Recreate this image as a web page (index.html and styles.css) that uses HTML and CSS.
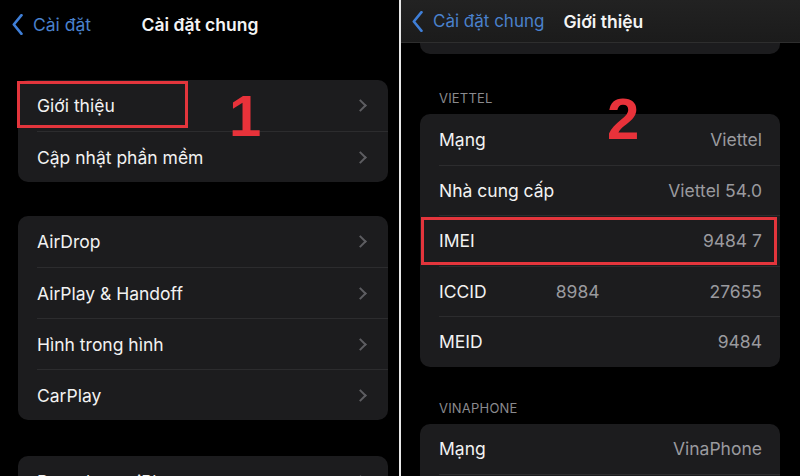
FILE: index.html
```html
<!DOCTYPE html>
<html lang="vi">
<head>
    <meta charset="UTF-8">
    <meta name="viewport" content="width=device-width, initial-scale=1.0">
    <title>Cài đặt chung - Giới thiệu</title>
    <link rel="stylesheet" href="styles.css">
</head>
<body>
    <div class="screens">
        <!-- Left screen: General settings -->
        <section class="panel panel-left">
            <header class="nav">
                <a class="nav-back" href="#">
                    <svg width="11" height="21" viewBox="0 0 11 21"><path d="M9.5 1.2L1.8 10.5l7.7 9.3" fill="none" stroke="currentColor" stroke-width="2.6" stroke-linecap="round" stroke-linejoin="round"/></svg>
                    <span>Cài đặt</span>
                </a>
                <h1 class="nav-title">Cài đặt chung</h1>
                <span></span>
            </header>

            <div class="group group-first">
                <div class="row">
                    <div class="row-body"><span class="row-label">Giới thiệu</span><span class="chev"></span></div>
                    <div class="mark mark-about"></div>
                </div>
                <div class="row">
                    <div class="row-body"><span class="row-label">Cập nhật phần mềm</span><span class="chev"></span></div>
                </div>
                <div class="step step-one">1</div>
            </div>

            <div class="group">
                <div class="row"><div class="row-body"><span class="row-label">AirDrop</span><span class="chev"></span></div></div>
                <div class="row"><div class="row-body"><span class="row-label">AirPlay &amp; Handoff</span><span class="chev"></span></div></div>
                <div class="row"><div class="row-body"><span class="row-label">Hình trong hình</span><span class="chev"></span></div></div>
                <div class="row"><div class="row-body"><span class="row-label">CarPlay</span><span class="chev"></span></div></div>
            </div>

            <div class="group group-last">
                <div class="row"><div class="row-body"><span class="row-label">Dung lượng iPhone</span><span class="chev"></span></div></div>
            </div>
        </section>

        <div class="divider"></div>

        <!-- Right screen: About -->
        <section class="panel panel-right">
            <header class="nav-bar">
                <a class="nav-back" href="#">
                    <svg width="11" height="21" viewBox="0 0 11 21"><path d="M9.5 1.2L1.8 10.5l7.7 9.3" fill="none" stroke="currentColor" stroke-width="2.6" stroke-linecap="round" stroke-linejoin="round"/></svg>
                    <span>Cài đặt chung</span>
                </a>
                <h1 class="nav-title">Giới thiệu</h1>
            </header>
            <div class="group-tail"></div>

            <h2 class="group-header group-header-first">VIETTEL</h2>
            <div class="group group-info">
                <div class="row"><div class="row-body"><span class="row-label">Mạng</span><span class="row-value">Viettel</span></div></div>
                <div class="row"><div class="row-body"><span class="row-label">Nhà cung cấp</span><span class="row-value">Viettel 54.0</span></div></div>
                <div class="row">
                    <div class="row-body"><span class="row-label">IMEI</span><span class="row-value">9484 7</span></div>
                    <div class="mark mark-imei"></div>
                </div>
                <div class="row"><div class="row-body"><span class="row-label">ICCID</span><span class="row-value split"><span>8984</span><span>27655</span></span></div></div>
                <div class="row"><div class="row-body"><span class="row-label">MEID</span><span class="row-value">9484</span></div></div>
                <div class="step step-two">2</div>
            </div>

            <h2 class="group-header">VINAPHONE</h2>
            <div class="group group-info">
                <div class="row"><div class="row-body"><span class="row-label">Mạng</span><span class="row-value">VinaPhone</span></div></div>
                <div class="row"><div class="row-body"><span class="row-label">Nhà cung cấp</span><span class="row-value">VinaPhone</span></div></div>
            </div>
        </section>
    </div>
</body>
</html>
```

FILE: styles.css
```css
body {
    margin: 0;
    padding: 0;
    background-color: #000;
    color: #f2f2f2;
    font-family: Inter, "Noto Sans", sans-serif;
}

.screens {
    display: flex;
    width: 800px;
    height: 476px;
    overflow: hidden;
}

.panel {
    position: relative;
    background-color: #000;
    overflow: hidden;
}

.panel-left {
    width: 399px;
    padding: 0 11px 0 18px;
    box-sizing: border-box;
}

.panel-right {
    flex: 1;
    padding: 0 20px 0 19px;
}

.divider {
    width: 2px;
    background-color: #e8e8e8;
}

/* navigation bars */
.nav {
    display: grid;
    grid-template-columns: 1fr auto 1fr;
    align-items: center;
    height: 48px;
    margin-left: -6px;
}

.nav-back {
    display: flex;
    align-items: center;
    gap: 10px;
    color: #3f7fd8;
    text-decoration: none;
    font-size: 17.5px;
    white-space: nowrap;
}

.nav-back span {
    color: #4a81cc;
}

.nav-title {
    margin: 0;
    font-size: 17.5px;
    font-weight: 600;
    color: #f4f4f4;
    white-space: nowrap;
}

.nav-bar {
    display: flex;
    align-items: center;
    gap: 19px;
    height: 43px;
    margin: 0 -20px 0 -19px;
    padding: 0 20px 0 11px;
    background: linear-gradient(#222, #1b1b1b);
    border-bottom: 1px solid #2e2e2e;
    box-sizing: border-box;
}

.nav-bar .nav-back {
    font-size: 17px;
}

.group-tail {
    height: 11px;
    background-color: #1c1c1e;
    border-radius: 0 0 10px 10px;
}

/* grouped lists */
.group {
    position: relative;
    background-color: #1c1c1e;
    border-radius: 10px;
    margin-top: 34px;
}

.group-first {
    margin-top: 32px;
}

.group-last {
    margin-top: 36px;
}

.row {
    position: relative;
    padding-left: 19px;
}

.row-body {
    display: flex;
    align-items: center;
    justify-content: space-between;
    height: 51px;
    padding-right: 21px;
    border-top: 1px solid #2c2c2e;
    box-sizing: border-box;
}

.row:first-child .row-body {
    border-top: none;
}

.row-label {
    font-size: 17.5px;
    color: #f2f2f2;
}

.chev {
    width: 7px;
    height: 7px;
    margin-right: 2px;
    border-top: 2px solid #5d5d61;
    border-right: 2px solid #5d5d61;
    transform: rotate(45deg);
}

.group-header {
    margin: 33px 0 0 19px;
    font-size: 13px;
    font-weight: 400;
    color: #8a8a8e;
    letter-spacing: 0.2px;
}

.group-header-first {
    margin-top: 36px;
}

.group-header + .group {
    margin-top: 8px;
}

.group-info .row-body {
    height: 50.5px;
    padding-right: 18px;
}

.row-value {
    font-size: 17.5px;
    color: #9a9a9e;
}

.split {
    display: flex;
    gap: 110px;
}

/* annotations */
.mark {
    position: absolute;
    border: 3px solid #e3353c;
    box-sizing: border-box;
}

.mark-about {
    left: -1px;
    top: 1px;
    width: 171px;
    height: 47px;
}

.mark-imei {
    left: 1px;
    top: 2px;
    width: 356px;
    height: 48px;
}

.step {
    position: absolute;
    font-family: "Liberation Sans", sans-serif;
    font-weight: 700;
    font-size: 58px;
    line-height: 1;
    color: #e8323a;
}

.step-one {
    left: 211px;
    top: 7px;
}

.step-two {
    left: 187px;
    top: -24px;
}
```
